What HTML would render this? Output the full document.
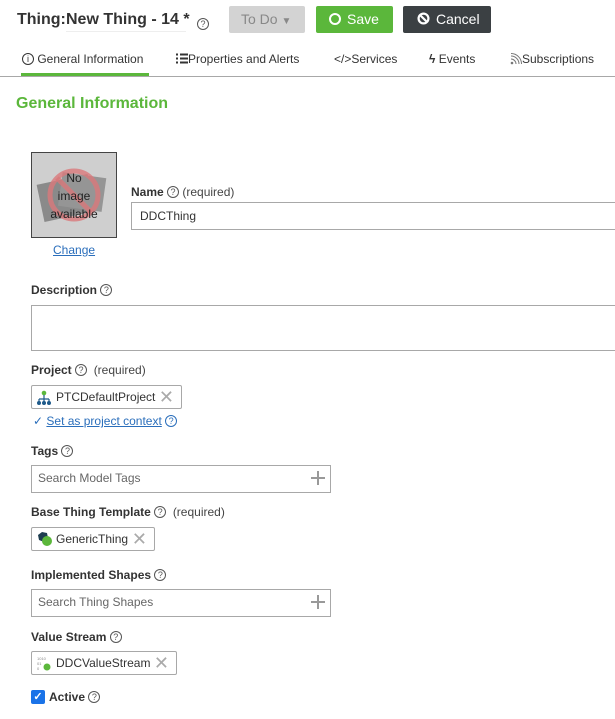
<!DOCTYPE html>
<html><head><meta charset="utf-8"><style>
*{box-sizing:border-box}
body{margin:0;width:615px;height:719px;overflow:hidden;background:#fff;font-family:"Liberation Sans",Arial,sans-serif;color:#333;position:relative}
.a{position:absolute;white-space:nowrap}
.q{display:inline-block;width:12px;height:12px;border:1px solid #555;border-radius:50%;font-size:9px;line-height:10px;text-align:center;color:#555;font-weight:normal;vertical-align:1px}
.lbl{font-size:12px;font-weight:bold;color:#333}
.req{font-weight:normal;color:#444}
.box{position:absolute;border:1px solid #a8a8a8;background:#fff}
.chip{position:absolute;border:1px solid #a8a8a8;border-radius:2px;background:#fff;font-size:12px;color:#333;height:24px;line-height:22px;padding-left:24px}
.x{position:absolute;right:7px;top:0;color:#aaa;font-size:18px}
.ph{font-size:12px;color:#666;padding-left:6px;line-height:25px}
.plus{position:absolute;right:5px;top:5px;width:14px;height:14px}
.plus:before{content:"";position:absolute;left:0;top:6px;width:14px;height:2px;background:#999}
.plus:after{content:"";position:absolute;left:6px;top:0;width:2px;height:14px;background:#999}
.tab{position:absolute;top:52px;font-size:12px;color:#333}
</style></head><body>
<div class="a" style="left:17px;top:11px;font-size:16px;font-weight:bold;color:#333">Thing:</div>
<div class="a" style="left:66px;top:11px;font-size:16px;font-weight:bold;color:#333;border-bottom:1px solid #eee;padding-bottom:2px;width:120px">New Thing - 14 *</div>
<div class="a" style="left:197px;top:15px"><span class="q">?</span></div>
<div class="a" style="left:229px;top:6px;width:76px;height:27px;background:#d3d3d3;border-radius:2px;color:#888;font-size:14px;line-height:27px;padding-left:12px">To Do <span style="font-size:10px">▼</span></div>
<div class="a" style="left:316px;top:6px;width:77px;height:27px;background:#5bb73b;border-radius:2px;color:#fff;font-size:14px;line-height:27px;padding-left:13px"><span style="display:inline-block;width:12px;height:12px;border:2px solid #fff;border-radius:50%;vertical-align:-1px;margin-right:6px"></span>Save</div>
<div class="a" style="left:403px;top:6px;width:88px;height:27px;background:#3b4043;border-radius:2px;color:#fff;font-size:14px;line-height:27px;padding-left:14px"><svg width="13" height="13" viewBox="0 0 14 14" style="vertical-align:-1px;margin-right:6px"><circle cx="7" cy="7" r="5.3" fill="none" stroke="#fff" stroke-width="2.4"/><line x1="3.5" y1="3.5" x2="10.5" y2="10.5" stroke="#fff" stroke-width="2.4"/></svg>Cancel</div>
<div class="tab" style="left:22px"><span class="q" style="border-color:#333;color:#333">i</span> General Information</div>
<div class="tab" style="left:176px"><svg width="12" height="11" style="vertical-align:-1px"><path d="M0 1.5h2M4 1.5h8M0 5.5h2M4 5.5h8M0 9.5h2M4 9.5h8" stroke="#333" stroke-width="2"/></svg>Properties and Alerts</div>
<div class="tab" style="left:334px">&lt;/&gt;Services</div>
<div class="tab" style="left:429px"><b>ϟ</b> Events</div>
<div class="tab" style="left:510px"><svg width="12" height="12" style="vertical-align:-2px"><circle cx="2" cy="10" r="1.3" fill="#777"/><path d="M1 6a5 5 0 0 1 5 5M1 3a8 8 0 0 1 8 8M1 0.5a10.5 10.5 0 0 1 10.5 10.5" stroke="#777" fill="none"/></svg>Subscriptions</div>
<div class="a" style="left:21px;top:73px;width:128px;height:3px;background:#5bb73b"></div>
<div class="a" style="left:0;top:76px;width:615px;height:1px;background:#a8a8a8"></div>
<div class="a" style="left:16px;top:95px;font-size:16px;font-weight:bold;color:#5bb73b">General Information</div>
<div class="a" style="left:31px;top:152px;width:86px;height:86px;border:1px solid #444;background:#cfcfcf;overflow:hidden">
<svg width="84" height="84" style="position:absolute;left:0;top:0"><rect x="8" y="26" width="52" height="38" fill="#8a8a8a" transform="rotate(-12 34 45)"/><rect x="28" y="22" width="44" height="34" fill="#959595" transform="rotate(8 50 40)"/><circle cx="42" cy="42" r="24" fill="none" stroke="#d9787a" stroke-width="5" opacity=".8"/><line x1="25" y1="25" x2="59" y2="59" stroke="#d9787a" stroke-width="5" opacity=".8"/></svg>
<div style="position:absolute;left:0;top:16px;width:84px;text-align:center;font-size:12px;line-height:18px;color:#222">No<br>image<br>available</div></div>
<div class="a" style="left:53px;top:243px;font-size:12px;color:#2a6ebb;text-decoration:underline">Change</div>
<div class="a lbl" style="left:131px;top:185px">Name <span class="q">?</span> <span class="req">(required)</span></div>
<div class="box" style="left:131px;top:202px;width:500px;height:28px;font-size:12px;line-height:26px;padding-left:8px">DDCThing</div>
<div class="a lbl" style="left:31px;top:283px">Description <span class="q">?</span></div>
<div class="box" style="left:31px;top:305px;width:600px;height:46px"></div>
<div class="a lbl" style="left:31px;top:363px">Project <span class="q">?</span> &nbsp;<span class="req">(required)</span></div>
<div class="chip" style="left:31px;top:385px;width:151px"><svg width="16" height="16" style="position:absolute;left:4px;top:4px"><circle cx="8" cy="3" r="2.3" fill="#5bb73b"/><path d="M8 5v4M3 9h10M3 9v3M8 9v3M13 9v3" stroke="#1e5a8a" stroke-width="1.2" fill="none"/><circle cx="3" cy="13" r="2" fill="#1e5a8a"/><circle cx="8" cy="13" r="2" fill="#1e5a8a"/><circle cx="13" cy="13" r="2" fill="#1e5a8a"/></svg>PTCDefaultProject<span class="x">✕</span></div>
<div class="a" style="left:33px;top:414px;font-size:12px;color:#2a6ebb"><span style="color:#2a6ebb">✓</span> <u>Set as project context</u> <span class="q" style="border-color:#2a6ebb;color:#2a6ebb">?</span></div>
<div class="a lbl" style="left:31px;top:444px">Tags <span class="q">?</span></div>
<div class="box" style="left:31px;top:465px;width:300px;height:28px"><div class="ph">Search Model Tags</div><span class="plus"></span></div>
<div class="a lbl" style="left:31px;top:505px">Base Thing Template <span class="q">?</span> &nbsp;<span class="req">(required)</span></div>
<div class="chip" style="left:31px;top:527px;width:124px"><svg width="18" height="16" style="position:absolute;left:4px;top:3px"><path d="M2 4l4-3 5 1 1 5-4 4-5-2z" fill="#1e3d50"/><circle cx="11" cy="10" r="5" fill="#5bb73b"/></svg>GenericThing<span class="x">✕</span></div>
<div class="a lbl" style="left:31px;top:568px">Implemented Shapes <span class="q">?</span></div>
<div class="box" style="left:31px;top:589px;width:300px;height:28px"><div class="ph">Search Thing Shapes</div><span class="plus"></span></div>
<div class="a lbl" style="left:31px;top:630px">Value Stream <span class="q">?</span></div>
<div class="chip" style="left:31px;top:651px;width:146px"><svg width="16" height="16" style="position:absolute;left:5px;top:4px"><text x="0" y="4" font-size="4" fill="#888" font-family="Liberation Sans">1010</text><text x="0" y="9" font-size="4" fill="#888" font-family="Liberation Sans">01</text><text x="0" y="14" font-size="4" fill="#888" font-family="Liberation Sans">0</text><circle cx="10" cy="11" r="3.5" fill="#5bb73b"/></svg>DDCValueStream<span class="x">✕</span></div>
<div class="a" style="left:31px;top:690px;width:14px;height:14px;background:#1a73e8;border-radius:2px;color:#fff;font-size:11px;line-height:14px;text-align:center;font-weight:bold">✓</div>
<div class="a lbl" style="left:49px;top:690px">Active <span class="q">?</span></div>
</body></html>
